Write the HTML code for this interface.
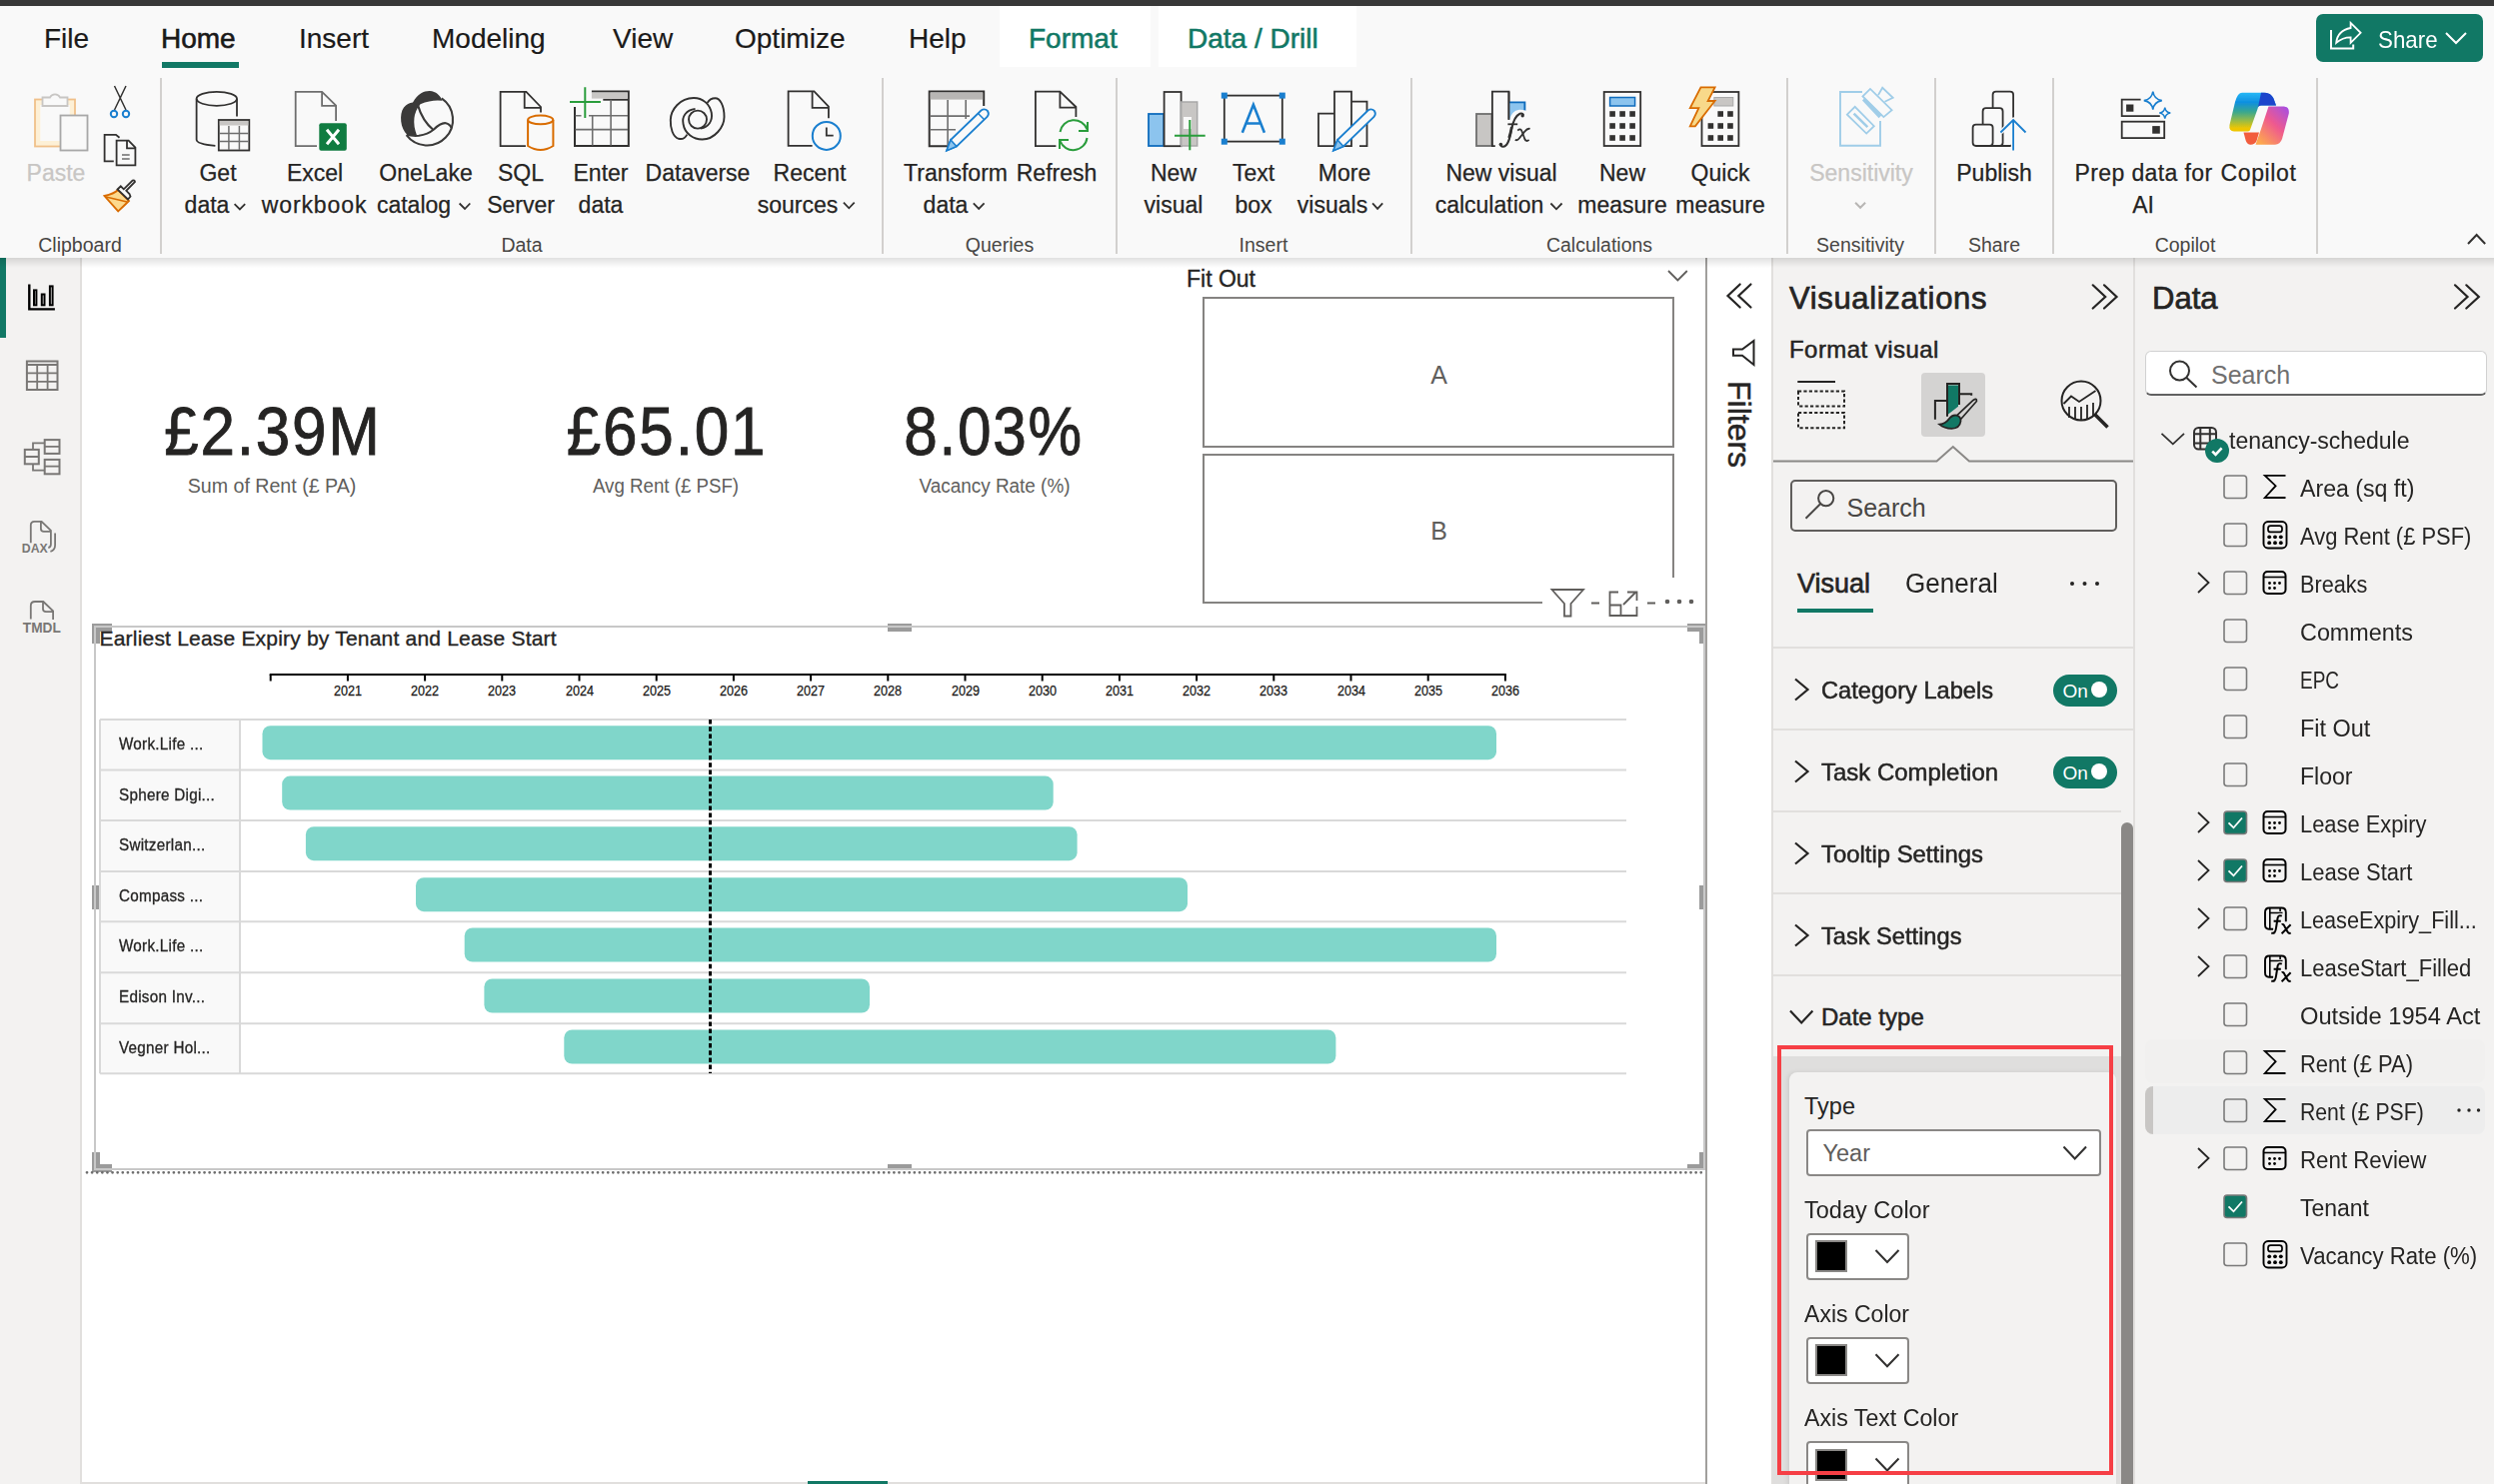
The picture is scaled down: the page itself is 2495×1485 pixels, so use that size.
<!DOCTYPE html>
<html><head><meta charset="utf-8">
<style>
*{margin:0;padding:0;box-sizing:border-box}
html,body{width:2495px;height:1485px;overflow:hidden;background:#fff;font-family:"Liberation Sans",sans-serif;color:#252423}
.a{position:absolute}
.t{position:absolute;line-height:1;white-space:nowrap}
.c{transform:translateX(-50%)}
svg{position:absolute;overflow:visible}
</style></head><body>
<!-- top dark bar -->
<div class="a" style="left:0;top:0;width:2495px;height:6px;background:#383838"></div>
<!-- tab row + ribbon -->
<div class="a" style="left:0;top:6px;width:2495px;height:252px;background:#f9f9f9"></div>
<div class="a" style="left:1000px;top:6px;width:151px;height:61px;background:#fff"></div>
<div class="a" style="left:1159px;top:6px;width:198px;height:61px;background:#fff"></div>
<div id="tabs" style="font-size:28px;color:#1b1a19;-webkit-text-stroke:0.2px currentColor">
<div class="t" style="left:44px;top:25px">File</div>
<div class="t" style="left:161px;top:25px;-webkit-text-stroke:0.6px #1b1a19">Home</div>
<div class="a" style="left:162px;top:62px;width:77px;height:6px;background:#117865"></div>
<div class="t" style="left:299px;top:25px">Insert</div>
<div class="t" style="left:432px;top:25px">Modeling</div>
<div class="t" style="left:613px;top:25px">View</div>
<div class="t" style="left:735px;top:25px">Optimize</div>
<div class="t" style="left:909px;top:25px">Help</div>
<div class="t" style="left:1029px;top:25px;color:#117865;-webkit-text-stroke:0.55px #117865">Format</div>
<div class="t" style="left:1188px;top:25px;color:#117865;-webkit-text-stroke:0.55px #117865">Data / Drill</div>
</div>

<!-- ribbon labels -->
<div id="riblabels" style="font-size:23px;color:#252423;-webkit-text-stroke:0.25px currentColor">
<div class="t c" style="left:56px;top:162px;color:#c8c6c4">Paste</div>
<div class="t c" style="left:218px;top:162px">Get</div>
<div class="t c" style="left:207px;top:194px">data</div>
<div class="t c" style="left:315px;top:162px">Excel</div>
<div class="t c" style="left:314.5px;top:194px;letter-spacing:0.9px">workbook</div>
<div class="t c" style="left:426px;top:162px">OneLake</div>
<div class="t c" style="left:414px;top:194px">catalog</div>
<div class="t c" style="left:521px;top:162px">SQL</div>
<div class="t c" style="left:521px;top:194px">Server</div>
<div class="t c" style="left:601px;top:162px">Enter</div>
<div class="t c" style="left:601px;top:194px">data</div>
<div class="t c" style="left:698px;top:162px">Dataverse</div>
<div class="t c" style="left:810px;top:162px">Recent</div>
<div class="t c" style="left:798px;top:194px">sources</div>
<div class="t c" style="left:956px;top:162px">Transform</div>
<div class="t c" style="left:946px;top:194px">data</div>
<div class="t c" style="left:1057px;top:162px">Refresh</div>
<div class="t c" style="left:1174px;top:162px">New</div>
<div class="t c" style="left:1174px;top:194px">visual</div>
<div class="t c" style="left:1254px;top:162px">Text</div>
<div class="t c" style="left:1254px;top:194px">box</div>
<div class="t c" style="left:1345px;top:162px">More</div>
<div class="t c" style="left:1333px;top:194px">visuals</div>
<div class="t c" style="left:1502px;top:162px">New visual</div>
<div class="t c" style="left:1490px;top:194px">calculation</div>
<div class="t c" style="left:1623px;top:162px">New</div>
<div class="t c" style="left:1623px;top:194px">measure</div>
<div class="t c" style="left:1721px;top:162px">Quick</div>
<div class="t c" style="left:1721px;top:194px">measure</div>
<div class="t c" style="left:1862px;top:162px;color:#c8c6c4">Sensitivity</div>
<div class="t c" style="left:1995px;top:162px">Publish</div>
<div class="t c" style="left:2144.5px;top:162px;letter-spacing:0.4px">Prep data for</div>
<div class="t c" style="left:2144px;top:194px">AI</div>
<div class="t c" style="left:2259.5px;top:162px;letter-spacing:0.6px">Copilot</div>
</div>
<div id="grouplabels" style="font-size:19.5px;color:#484644">
<div class="t c" style="left:80px;top:236px">Clipboard</div>
<div class="t c" style="left:522px;top:236px">Data</div>
<div class="t c" style="left:1000px;top:236px">Queries</div>
<div class="t c" style="left:1264px;top:236px">Insert</div>
<div class="t c" style="left:1600px;top:236px">Calculations</div>
<div class="t c" style="left:1861px;top:236px">Sensitivity</div>
<div class="t c" style="left:1995px;top:236px">Share</div>
<div class="t c" style="left:2186px;top:236px">Copilot</div>
</div>
<!-- separators -->
<div class="a" style="left:160px;top:78px;width:2px;height:176px;background:#d2d0ce"></div>
<div class="a" style="left:882px;top:78px;width:2px;height:176px;background:#d2d0ce"></div>
<div class="a" style="left:1116px;top:78px;width:2px;height:176px;background:#d2d0ce"></div>
<div class="a" style="left:1411px;top:78px;width:2px;height:176px;background:#d2d0ce"></div>
<div class="a" style="left:1787px;top:78px;width:2px;height:176px;background:#d2d0ce"></div>
<div class="a" style="left:1935px;top:78px;width:2px;height:176px;background:#d2d0ce"></div>
<div class="a" style="left:2053px;top:78px;width:2px;height:176px;background:#d2d0ce"></div>
<div class="a" style="left:2317px;top:78px;width:2px;height:176px;background:#d2d0ce"></div>
<svg style="left:0;top:0" width="2495" height="260" viewBox="0 0 2495 260">
<g fill="none" stroke-linejoin="miter">
<!-- Paste -->
<rect x="35" y="99.5" width="40" height="47" fill="#fdf0d6" stroke="#f0c08a" stroke-width="1.8"/><rect x="40.3" y="105" width="29.5" height="36" fill="#f9f9f9"/>
<path d="M42.5 106 V97.5 H50 A5.5 5.5 0 0 1 60 97.5 H67.5 V106 Z" fill="#f9f9f9" stroke="#c8c6c4" stroke-width="1.8"/>
<rect x="60.5" y="115.5" width="27" height="35" fill="#f9f9f9" stroke="#a8a8a8" stroke-width="1.8"/>
<!-- scissors -->
<path d="M114.5 86 L126 110 M126 86 L114.5 110" stroke="#323130" stroke-width="1.5"/>
<circle cx="114" cy="114" r="3.2" stroke="#1a7fcf" stroke-width="2"/>
<circle cx="126" cy="114" r="3.2" stroke="#1a7fcf" stroke-width="2"/>
<!-- copy -->
<path d="M113.8 161.3 H104.6 V134.8 H116 L119.5 137.8" stroke="#323130" stroke-width="1.8"/>
<path d="M116.6 140.6 H128.6 L135.4 147.6 V165.4 H116.6 Z M127 140.6 V148.4 H135.4" stroke="#323130" stroke-width="1.8"/>
<path d="M122 154.9 H129.7 M122 159.1 H129.7" stroke="#6e6e6e" stroke-width="1.5"/>
<!-- format painter -->
<path d="M104.5 196 Q114 194 118 190 L129 201 Q124 206 118.2 211.4 Z" fill="#fcd98d" stroke="#d96c00" stroke-width="1.8"/>
<path d="M106 197 L127 202" stroke="#d96c00" stroke-width="1.5"/>
<path d="M117.5 189.5 L120.8 186.3 L123.8 189.3 L132.6 180.5 Q134.6 180 135 182 L126.3 190.8 L129.5 194 L130.5 196.5 L128 199.5 Z" fill="#f9f9f9" stroke="#323130" stroke-width="1.8"/>
<!-- Get data -->
<path d="M215.4 145.9 Q196.6 144 196.6 139.7 V98.8 M237 98.8 V116.6" stroke="#323130" stroke-width="1.8"/>
<ellipse cx="216.8" cy="98.8" rx="20.2" ry="7" stroke="#323130" stroke-width="1.8"/>
<rect x="218.8" y="120" width="30.5" height="30.5" fill="#f9f9f9" stroke="#323130" stroke-width="1.8"/>
<rect x="219.8" y="121" width="28.5" height="4.5" fill="#c8c6c4"/>
<path d="M228.9 126 V150 M239.4 126 V150 M219.8 133.4 H248.5 M219.8 141.6 H248.5" stroke="#6e6e6e" stroke-width="1.5"/>
<path d="M234.6 204.2 L239.9 209.5 L245.2 204.2" stroke="#323130" stroke-width="1.8"/>
<!-- Excel -->
<path d="M317 146.2 H295.7 V91.8 H322.1 L336.1 105.6 V121 M322.1 91.8 V105.8 H336.1" stroke="#6e6e6e" stroke-width="1.8"/>
<rect x="319.3" y="123.2" width="27.5" height="27.5" rx="2" fill="#107c41"/>
<path d="M327 129.8 L339 144.3 M339 129.8 L327 144.3" stroke="#fff" stroke-width="3"/>
<!-- OneLake -->
<path d="M441.8 98.4 A25.8 25.8 0 1 1 406.6 135.2" stroke="#3b3a39" stroke-width="2.1"/>
<path d="M407.5 135 C400.5 129 399 114 404 107.5 C406.5 104.5 409.5 103.2 413 102.6 C418 93.5 424.5 90.8 430 91 C436 91.3 440.5 95.5 442.5 100.8 Q432 99.5 420.5 104.2 Q410 117 417 135.4 Z" fill="#3b3a39"/>
<path d="M406.8 134.6 Q412 136.4 419 135.8 Q428 134.5 434 129.5 Q441 122.5 446 123.2 Q450 124 451.5 128" stroke="#3b3a39" stroke-width="2.1"/>
<path d="M417.8 104.6 Q422.5 121 433.8 130.3" stroke="#3b3a39" stroke-width="2.1"/>
<!-- SQL -->
<path d="M525.9 146.2 H500.6 V91.8 H526.4 L541 107 V112.6 M524.7 91.8 V107.8 H541" stroke="#323130" stroke-width="1.8"/>
<path d="M528.1 119.9 V146 Q540.7 154 553.4 146 V119.9" fill="#f9f9f9" stroke="#d96c00" stroke-width="2"/>
<ellipse cx="540.7" cy="119.9" rx="12.6" ry="4.3" fill="#f9f9f9" stroke="#d96c00" stroke-width="2"/>
<path d="M459.6 203.5 L465 209 L470.3 203.5" stroke="#323130" stroke-width="1.8"/>
<!-- Enter data -->
<path d="M575 107 V145.9 H628.8 V91.4 H591.9" stroke="#323130" stroke-width="2"/>
<rect x="591.9" y="92.6" width="36" height="6" fill="#c8c6c4"/>
<path d="M603.3 99.8 H628.8" stroke="#323130" stroke-width="1.8"/>
<path d="M575.5 115.7 H581.5 M589 115.7 H628 M575.5 129.6 H628 M592.7 115.7 V145.5 M611.1 99.8 V145.5" stroke="#6e6e6e" stroke-width="1.6"/>
<path d="M585.3 87.2 V117.9 M570 102 H600.9" stroke="#2a9d3c" stroke-width="2"/>
<!-- Dataverse -->
<path d="M687.3 134.6 C685 139 682 139.5 679 138.8 C673 137 670.5 128 670.8 120 C671 110 680 98 694 98 C703 98 710 104 711.8 113 C713 121 709 127 701 128.5" stroke="#323130" stroke-width="1.9"/>
<path d="M695.5 109 C686 110 682 117 683.5 124 C685 134 694 139.5 702.5 139.5 C715 139.5 724.5 127 724.5 117 C724.5 105 720 98.3 715.5 98.3 C711.5 98.3 709 100.5 707.5 103" stroke="#323130" stroke-width="1.9"/>
<circle cx="698" cy="119.6" r="9" stroke="#323130" stroke-width="1.9"/>
<!-- Recent -->
<path d="M812.6 145.9 H788.6 V91.4 H814.4 L828.9 106.7 V118.3 M812.6 91.4 V107.9 H828.9" stroke="#323130" stroke-width="1.8"/>
<circle cx="826.8" cy="135.9" r="14" fill="#f9f9f9" stroke="#1a7fcf" stroke-width="2"/>
<path d="M826.8 127.5 V135.6 H833.7" stroke="#323130" stroke-width="1.8"/>
<path d="M843.9 202.7 L849.3 208.3 L854.7 202.7" stroke="#323130" stroke-width="1.8"/>
<!-- Transform -->
<path d="M949.7 146.2 H929.7 V91.6 H984.2 V106" stroke="#323130" stroke-width="2"/>
<rect x="930.7" y="92.6" width="52.5" height="7" fill="#b8b6b4"/>
<path d="M948.1 100 V146 M966.2 100 V119 M930.7 116.1 H970 M930.7 129.7 H956" stroke="#6e6e6e" stroke-width="1.6"/>
<path d="M947.1 150.6 L951 140 L981.5 110.5 Q985 108 988 111 Q990 114 987.5 117 L957 146.5 Z" fill="#f9f9f9" stroke="#1a7fcf" stroke-width="1.8"/>
<path d="M947.1 150.6 L951 140 L957 146.5 Z" fill="#8cc4ee" stroke="#1a7fcf" stroke-width="1.5"/>
<path d="M978.5 113.5 L984.5 119.5" stroke="#1a7fcf" stroke-width="1.5"/>
<path d="M973.8 203.3 L979.2 208.9 L984.6 203.3" stroke="#323130" stroke-width="1.8"/>
<!-- Refresh -->
<path d="M1056.4 146.2 H1035.9 V91.6 H1060.4 L1076.4 107 V117.1 M1060.4 91.6 V107.7 H1076.4" stroke="#323130" stroke-width="1.8"/>
<path d="M1060.5 132 A14 14 0 0 1 1087.5 129.5 M1087.5 138 A14 14 0 0 1 1060.5 141" stroke="#2a9d3c" stroke-width="2"/>
<path d="M1079 131 H1088 V122 M1069 140 H1060 V149" stroke="#2a9d3c" stroke-width="2"/>
<!-- New visual -->
<rect x="1149" y="114" width="15.2" height="32" fill="#8cc4ee" stroke="#0f6cbd" stroke-width="1.8"/>
<rect x="1164.6" y="92" width="17" height="54.2" fill="#f9f9f9" stroke="#323130" stroke-width="1.8"/>
<rect x="1181.7" y="102" width="16" height="44" fill="#c8c6c4" stroke="#a8a8a8" stroke-width="1.5"/>
<rect x="1184" y="117" width="8" height="12" fill="#f9f9f9"/>
<path d="M1190.3 120.1 V150.2 M1175 135.7 H1205.7" stroke="#2a9d3c" stroke-width="2"/>
<!-- Text box -->
<rect x="1224.8" y="95.6" width="58" height="46" stroke="#323130" stroke-width="1.8"/>
<rect x="1221.8" y="92.6" width="6" height="6" fill="#1a7fcf"/>
<rect x="1279.8" y="92.6" width="6" height="6" fill="#1a7fcf"/>
<rect x="1221.8" y="138.7" width="6" height="6" fill="#1a7fcf"/>
<rect x="1279.8" y="138.7" width="6" height="6" fill="#1a7fcf"/>
<path d="M1242.8 132.8 L1253.9 104.8 L1264.9 132.8 M1246.8 123.5 H1261" stroke="#1a7fcf" stroke-width="2.6"/>
<!-- More visuals -->
<path d="M1335 146.2 H1319 V113.7 H1335 M1335 146.2 V91.6 H1352 V146.2 H1340 M1352 101.7 H1367.5 V146.2 H1360" stroke="#323130" stroke-width="1.8"/>
<path d="M1334 150.6 L1338 140 L1368.5 110.5 Q1372 108 1375 111 Q1377 114 1374.5 117 L1344 146.5 Z" fill="#f9f9f9" stroke="#1a7fcf" stroke-width="1.8"/>
<path d="M1334 150.6 L1338 140 L1344 146.5 Z" fill="#8cc4ee" stroke="#1a7fcf" stroke-width="1.5"/>
<path d="M1373.1 203.3 L1378.1 208.9 L1383.2 203.3" stroke="#323130" stroke-width="1.8"/>
<!-- New visual calc -->
<rect x="1477" y="114" width="15.4" height="32" fill="#c8c6c4" stroke="#6e6e6e" stroke-width="1.8"/>
<path d="M1492.9 146.2 V91.6 H1509.5 V119.8 M1492 146.1 H1495.8" stroke="#323130" stroke-width="1.8"/>
<rect x="1510" y="102.4" width="15.4" height="18" fill="#8cc4ee"/>
<path d="M1509.5 102.4 H1525.4 V110.8" stroke="#0f6cbd" stroke-width="1.9"/>
<path d="M1509.8 121 Q1511.8 110.8 1520 109.8 Q1524.3 109.6 1527 111.2 V122 Z" fill="#f9f9f9"/>
<path d="M1509.5 91.6 V119.8" stroke="#323130" stroke-width="1.8"/>
<path d="M1501.2 145.3 Q1503.8 148.5 1507.2 144.8 Q1510.2 140.8 1512 130 Q1514.5 116.5 1520.5 113.8 Q1523.3 112.8 1524 115.3" stroke="#323130" stroke-width="2.1"/><path d="M1509.6 138 Q1511.3 133 1512.3 127" stroke="#323130" stroke-width="2.6"/>
<circle cx="1501.4" cy="144.6" r="1.8" fill="#323130"/><circle cx="1523.2" cy="115.8" r="1.7" fill="#323130"/>
<path d="M1508.4 124.3 H1518.2" stroke="#323130" stroke-width="1.8"/>
<path d="M1518.3 130.6 Q1521.2 127.6 1522.8 132 L1525.3 139 Q1527 142.5 1529.6 139.8" stroke="#323130" stroke-width="1.8"/>
<path d="M1530.6 128.9 Q1528.2 128 1525.2 131.8 L1520.2 138 Q1517.8 141.2 1515.8 139.8" stroke="#323130" stroke-width="1.8"/>
<path d="M1551.4 203.5 L1557 209.3 L1562.6 203.5" stroke="#323130" stroke-width="1.8"/>
<!-- New measure -->
<rect x="1604.7" y="92" width="36.5" height="54" stroke="#323130" stroke-width="1.8"/>
<rect x="1610.6" y="97.5" width="25" height="8.5" fill="#8cc4ee" stroke="#0f6cbd" stroke-width="1.5"/>
<g fill="#323130" stroke="none">
<rect x="1610.3" y="111.2" width="5.6" height="5.6"/><rect x="1620.3" y="111.2" width="5.6" height="5.6"/><rect x="1630.3" y="111.2" width="5.6" height="5.6"/>
<rect x="1610.3" y="123.2" width="5.6" height="5.6"/><rect x="1620.3" y="123.2" width="5.6" height="5.6"/><rect x="1630.3" y="123.2" width="5.6" height="5.6"/>
<rect x="1610.3" y="135.2" width="5.6" height="5.6"/><rect x="1620.3" y="135.2" width="5.6" height="5.6"/><rect x="1630.3" y="135.2" width="5.6" height="5.6"/>
</g>
<!-- Quick measure -->
<rect x="1702.5" y="92" width="36.9" height="54" stroke="#323130" stroke-width="1.8"/>
<rect x="1714.9" y="97.5" width="18.9" height="8.5" fill="#c8c6c4" stroke="#a8a8a8" stroke-width="1"/>
<g fill="#323130" stroke="none">
<rect x="1718.4" y="111.2" width="5.6" height="5.6"/><rect x="1728.2" y="111.2" width="5.6" height="5.6"/>
<rect x="1708.6" y="123.2" width="5.6" height="5.6"/><rect x="1718.4" y="123.2" width="5.6" height="5.6"/><rect x="1728.2" y="123.2" width="5.6" height="5.6"/>
<rect x="1708.6" y="135.2" width="5.6" height="5.6"/><rect x="1718.4" y="135.2" width="5.6" height="5.6"/><rect x="1728.2" y="135.2" width="5.6" height="5.6"/>
</g>
<path d="M1701.5 87.3 H1715.6 L1708.6 101 H1715.6 L1695.9 126.3 H1690.8 L1699.4 108.1 H1690.8 Z" fill="#f8d98a" stroke="#d96c00" stroke-width="1.8"/>
<!-- Sensitivity -->
<path d="M1863 92 H1841 V145.8 H1881 V121" stroke="#a0cde8" stroke-width="1.9"/>
<path d="M1847.9 114.7 L1855.7 106.9 L1874.8 126.2 L1867.2 133.6 Z" stroke="#a0cde8" stroke-width="1.8"/>
<path d="M1854.6 113.6 L1868.3 127.1" stroke="#a0cde8" stroke-width="2.6"/>
<path d="M1863.5 96.4 L1871 88.9 L1892.6 110.2 L1884.4 117.1 Z" fill="#f9f9f9" stroke="#a0cde8" stroke-width="1.8"/>
<path d="M1863 100.5 L1865.2 98.2 L1882.8 114.9 L1879.6 118.2 Z" fill="#a0cde8"/>
<path d="M1879 95.1 L1883.2 87.8 L1893.7 97.8 L1885.5 101.8" stroke="#a0cde8" stroke-width="1.8"/>
<path d="M1856.1 202.7 L1861.1 207.8 L1866.1 202.7" stroke="#b8b6b4" stroke-width="2"/>
<!-- Publish -->
<rect x="1993.6" y="91.6" width="20.5" height="54.4" rx="3.2" fill="#f9f9f9" stroke="#323130" stroke-width="1.8"/>
<rect x="1983.6" y="108.2" width="20" height="37.8" rx="3.2" fill="#f9f9f9" stroke="#323130" stroke-width="1.8"/>
<rect x="1973.6" y="124.6" width="20" height="21.4" rx="3.2" fill="#f9f9f9" stroke="#323130" stroke-width="1.8"/>
<path d="M2014.1 120.1 V150.6 M2001.4 132.5 L2014.1 120.1 L2026.5 132.5" stroke="#f9f9f9" stroke-width="4.5"/>
<path d="M2014.1 120.1 V150.6 M2001.4 132.5 L2014.1 120.1 L2026.5 132.5" stroke="#1a7fcf" stroke-width="1.8"/>
<!-- Prep data for AI -->
<path d="M2141.6 99.6 H2122.7 V116.1 H2160.8" stroke="#323130" stroke-width="1.8"/>
<rect x="2127.1" y="104.5" width="7.3" height="7.2" fill="#323130"/>
<rect x="2122.7" y="121.7" width="42.5" height="16.4" stroke="#323130" stroke-width="1.8"/>
<rect x="2153.2" y="126.1" width="7.6" height="7.6" fill="#323130"/>
<path d="M2153.8 91.6 Q2155 99.4 2162.8 100.6 Q2155 101.8 2153.8 109.6 Q2152.6 101.8 2144.8 100.6 Q2152.6 99.4 2153.8 91.6 Z" fill="#f9f9f9" stroke="#1a7fcf" stroke-width="1.6"/>
<path d="M2165.8 107.6 Q2166.5 112.4 2171.3 113.1 Q2166.5 113.8 2165.8 118.6 Q2165.1 113.8 2160.3 113.1 Q2165.1 112.4 2165.8 107.6 Z" fill="#f9f9f9" stroke="#1a7fcf" stroke-width="1.5"/>
</g>
<!-- Copilot -->
<defs>
<linearGradient id="cpA" x1="0" y1="0" x2="0" y2="1"><stop offset="0" stop-color="#26b8f6"/><stop offset="0.25" stop-color="#0f8fe0"/><stop offset="0.5" stop-color="#3aa88e"/><stop offset="0.72" stop-color="#96bb48"/><stop offset="0.92" stop-color="#eec600"/></linearGradient>
<linearGradient id="cpB" x1="1" y1="0" x2="0.2" y2="1"><stop offset="0" stop-color="#a24ee8"/><stop offset="0.5" stop-color="#ef5a8e"/><stop offset="1" stop-color="#fda84e"/></linearGradient>
<filter id="cpblur"><feGaussianBlur stdDeviation="0.7"/></filter>
</defs>
<g filter="url(#cpblur)">
<path d="M2244.5 132.5 H2260 L2257.5 141 Q2255.5 145 2251 144.7 Q2247.5 144.2 2246.5 140 Z" fill="#f25c3c"/>
<path d="M2243 92.7 H2264 Q2271 92.7 2274 97.5 L2277 105.6 H2262 Q2259 106 2258.5 109 L2250.8 130.5 Q2250 131.5 2248.5 131.5 H2235 Q2229.5 131 2230.5 125 L2236 102 Q2238.5 92.7 2243 92.7 Z" fill="url(#cpA)"/>
<path d="M2262 92.7 H2266 Q2272 93 2274.5 98.5 L2277 105.6 H2262 Q2259.5 106 2259 107 Z" fill="#1f45cc"/>
<path d="M2269.5 106.5 H2285 Q2290.5 107 2289.8 113.5 L2283 139 Q2281 144.7 2276 144.7 H2256.5 L2261.5 130.5 Z" fill="url(#cpB)"/>
</g>
</svg>

<!-- share button -->
<div class="a" style="left:2317px;top:14px;width:167px;height:48px;background:#117865;border-radius:7px"></div>
<div class="t" style="left:2378.5px;top:27.6px;font-size:24px;color:#fff;transform-origin:left;transform:scaleX(0.93)">Share</div>
<svg style="left:0;top:0" width="2495" height="260" viewBox="0 0 2495 260"><g fill="none" stroke-width="2">
<path d="M2332 30 V48.6 H2354.2 V44.5" stroke="#fff"/>
<path d="M2337.2 42.8 Q2338.5 30.5 2351.6 28 V22.8 L2361.6 32.8 L2351.6 42.8 V37.3 Q2343.5 37.3 2337.2 42.8 Z" stroke="#fff" stroke-width="1.8" stroke-linejoin="miter"/>
<path d="M2447 33 L2457 43 L2467 33" stroke="#fff"/>
<path d="M2469 244 L2477.6 235 L2486.2 244" stroke="#323130"/>
</g></svg>
<!-- ribbon bottom shadow -->
<div class="a" style="left:0;top:258px;width:2495px;height:10px;background:linear-gradient(#d8d8d8,rgba(255,255,255,0))"></div>

<!-- left nav -->
<div class="a" style="left:0;top:258px;width:80px;height:1227px;background:#f3f2f1"></div>
<div class="a" style="left:80px;top:258px;width:2px;height:1227px;background:#e1dfdd"></div>
<div class="a" style="left:0;top:258px;width:6px;height:80px;background:#117865"></div>

<!-- canvas -->
<div class="a" style="left:82px;top:258px;width:1624px;height:1227px;background:#fff"></div>
<div class="a" style="left:1706px;top:258px;width:2px;height:1227px;background:#a19f9d"></div>
<!-- filters strip -->
<div class="a" style="left:1708px;top:258px;width:64px;height:1227px;background:#fff"></div>
<div class="a" style="left:1772px;top:258px;width:2px;height:1227px;background:#e1dfdd"></div>
<!-- viz pane -->
<div class="a" style="left:1774px;top:258px;width:360px;height:1227px;background:#f3f2f1"></div>
<div class="a" style="left:2134px;top:258px;width:2px;height:1227px;background:#e1dfdd"></div>
<!-- data pane -->
<div class="a" style="left:2136px;top:258px;width:359px;height:1227px;background:#f3f2f1"></div>
<!-- CANVAS -->
<svg style="left:0;top:0" width="90" height="660" viewBox="0 0 90 660"><g fill="none" stroke-linejoin="miter">
<path d="M29.3 284.4 V309.4 H54.9" stroke="#000" stroke-width="2.4"/>
<rect x="34" y="290.4" width="2.4" height="14.9" stroke="#000" stroke-width="2"/>
<rect x="41.8" y="294.5" width="2.7" height="10.8" stroke="#000" stroke-width="2"/>
<rect x="49.9" y="286.4" width="2.7" height="18.9" stroke="#000" stroke-width="2"/>
<rect x="26.9" y="361.5" width="30.6" height="28.5" stroke="#797775" stroke-width="2"/>
<path d="M26.9 365 H57.5 M26.9 373.4 H57.5 M26.9 381.8 H57.5 M37.2 365 V390 M47.6 365 V390" stroke="#797775" stroke-width="1.8"/>
<rect x="24.8" y="449.9" width="14" height="14.4" stroke="#797775" stroke-width="2"/>
<rect x="44.7" y="440.1" width="14.8" height="13.8" stroke="#797775" stroke-width="2"/>
<rect x="44.7" y="459.9" width="14.8" height="14.4" stroke="#797775" stroke-width="2"/>
<path d="M24.8 457 H38.8 M44.7 446.8 H59.5 M44.7 466.6 H59.5 M33 449.9 V443.4 H44.7 M33 464.3 V470.6 H44.7" stroke="#797775" stroke-width="1.8"/>
<path d="M30.8 543.2 V525.5 Q30.8 521.9 34.5 521.9 H41.6 L50.9 530.8 V544.5 Q50.9 547.6 48.3 548 M40.9 522 V529 Q40.9 531.9 43.8 531.9 H50.7 M55.1 533.6 V545.5 Q55.1 550.6 50.4 551.8" stroke="#797775" stroke-width="1.8"/>
<path d="M30.8 619.6 V606.2 Q30.8 602 35 602 H43.3 L53.1 611.4 V620 M43 602.2 V609.2 Q43 612.1 46 612.1 H52.6" stroke="#797775" stroke-width="1.8"/>
</g>
<text x="21.8" y="552.7" font-family="Liberation Sans" font-weight="bold" font-size="13" fill="#797775" textLength="26" lengthAdjust="spacingAndGlyphs">DAX</text>
<text x="22.8" y="632.8" font-family="Liberation Sans" font-weight="bold" font-size="14" fill="#797775" textLength="38" lengthAdjust="spacingAndGlyphs">TMDL</text>
</svg>
<div class="t" style="left:273px;top:397.8px;font-size:68.5px;color:#252423;-webkit-text-stroke:0.9px #252423;letter-spacing:2px;transform:translateX(-50%) scaleX(0.905)">£2.39M</div>
<div class="t" style="left:271.5px;top:476px;font-size:20px;color:#605e5c;transform:translateX(-50%) scaleX(0.98)">Sum of Rent (£ PA)</div>
<div class="t" style="left:667px;top:397.8px;font-size:68.5px;color:#252423;-webkit-text-stroke:0.9px #252423;letter-spacing:2px;transform:translateX(-50%) scaleX(0.905)">£65.01</div>
<div class="t" style="left:666px;top:476px;font-size:20px;color:#605e5c;transform:translateX(-50%) scaleX(0.934)">Avg Rent (£ PSF)</div>
<div class="t" style="left:994.2px;top:397.8px;font-size:68.5px;color:#252423;-webkit-text-stroke:0.9px #252423;letter-spacing:2px;transform:translateX(-50%) scaleX(0.88)">8.03%</div>
<div class="t" style="left:994.5px;top:476px;font-size:20px;color:#605e5c;transform:translateX(-50%) scaleX(0.946)">Vacancy Rate (%)</div>
<div class="t" style="left:1187px;top:267.7px;font-size:23px;color:#252423;-webkit-text-stroke:0.35px #252423">Fit Out</div>
<div class="a" style="left:1203px;top:297px;width:472px;height:151px;border:2px solid #858381"></div>
<div class="a" style="left:1203px;top:454px;width:472px;height:150px;border:2px solid #858381"></div>
<div class="t c" style="left:1439.5px;top:362.8px;font-size:25px;color:#605e5c">A</div>
<div class="t c" style="left:1439.5px;top:518.8px;font-size:25px;color:#605e5c">B</div>
<div class="a" style="left:1543px;top:578px;width:160px;height:44px;background:#fff"></div>
<svg style="left:0;top:0" width="1710" height="700" viewBox="0 0 1710 700"><g fill="none" stroke="#605e5c" stroke-width="1.8">
<path d="M1669 271 L1678.4 280.5 L1687.8 271"/>
<path d="M1552.5 590 H1584 L1571.5 604 V616.5 H1565 V604 Z"/>
<path d="M1592 603.5 H1600 M1648 603.5 H1656"/>
<path d="M1619 592.5 H1610.5 V616 H1637.5 V607 M1610.5 605.5 H1621.5 V616 M1624 605 L1636 593 M1628 592.5 H1637.5 V601" />
</g>
<g fill="#605e5c"><circle cx="1668" cy="602" r="2.3"/><circle cx="1680" cy="602" r="2.3"/><circle cx="1692" cy="602" r="2.3"/></g>
</svg>
<div class="a" style="left:94px;top:626px;width:1612px;height:545px;border:2px solid #c8c8c8"></div>
<svg style="left:0;top:0" width="1710" height="1180" viewBox="0 0 1710 1180"><g fill="#9b9b9b">
<path d="M92 624 H112 V626 H94 V644 H92 Z M96 628 H112 V632 H100 V644 H96 Z"/>
<path d="M1688 624 H1706 V626 H1688 Z M1688 628 H1704 V644 H1700 V632 H1688 Z"/>
<path d="M92 1173 H112 V1171 H94 V1153 H92 Z M96 1169 H112 V1165 H100 V1153 H96 Z"/>
<path d="M1688 1169 H1704 V1153 H1700 V1165 H1688 Z"/>
<rect x="888" y="624" width="24" height="2"/><rect x="888" y="628" width="24" height="4"/>
<rect x="888" y="1165" width="24" height="4"/>
<rect x="92" y="886" width="2" height="24"/><rect x="96" y="886" width="4" height="24"/>
<rect x="1700" y="886" width="4" height="24"/>
</g>
<line x1="87" y1="1173.3" x2="1706" y2="1173.3" stroke="#6e6e6e" stroke-width="2.8" stroke-linecap="round" stroke-dasharray="0.01 5.1"/>
</svg>
<div class="t" style="left:99.5px;top:628.2px;font-size:21px;color:#252423;-webkit-text-stroke:0.35px #252423;letter-spacing:0.2px;transform-origin:left;transform:scaleX(1.0)">Earliest Lease Expiry by Tenant and Lease Start</div>
<svg style="left:0;top:0" width="1710" height="1100" viewBox="0 0 1710 1100">
<line x1="269.7" y1="675" x2="1506.9" y2="675" stroke="#000" stroke-width="2.2"/>
<path d="M270.7 675 V681.5 M347.9 675 V681.5 M425.1 675 V681.5 M502.3 675 V681.5 M579.5 675 V681.5 M656.7 675 V681.5 M733.9 675 V681.5 M811.1 675 V681.5 M888.3 675 V681.5 M965.5 675 V681.5 M1042.7 675 V681.5 M1119.9 675 V681.5 M1197.1 675 V681.5 M1274.3 675 V681.5 M1351.5 675 V681.5 M1428.7 675 V681.5 M1505.9 675 V681.5 " stroke="#000" stroke-width="2"/>
<rect x="100" y="720" width="140" height="354.2" fill="#f9f9f9"/>
<path d="M100 720 H1627 M100 770.4 H1627 M100 821 H1627 M100 872 H1627 M100 922.3 H1627 M100 973.3 H1627 M100 1024.3 H1627 M100 1074.2 H1627 M240 720 V1074.2 M100 720 V1074.2" stroke="#d9d9d9" stroke-width="2" fill="none"/>
<rect x="262.5" y="726.2" width="1234.5" height="34" rx="8" fill="#80d6ca"/>
<rect x="282.2" y="776.6" width="771.5" height="34" rx="8" fill="#80d6ca"/>
<rect x="305.9" y="827.2" width="771.7" height="34" rx="8" fill="#80d6ca"/>
<rect x="416" y="878.2" width="772.0" height="34" rx="8" fill="#80d6ca"/>
<rect x="464.7" y="928.5" width="1032.3" height="34" rx="8" fill="#80d6ca"/>
<rect x="484.4" y="979.5" width="385.6" height="34" rx="8" fill="#80d6ca"/>
<rect x="564.3" y="1030.5" width="772.1" height="34" rx="8" fill="#80d6ca"/>
<line x1="710.5" y1="720" x2="710.5" y2="1074" stroke="#000" stroke-width="3" stroke-dasharray="4.5 2.7"/>
</svg>
<div class="t" style="left:348.0px;top:684.3px;font-size:14px;color:#1b1a19;-webkit-text-stroke:0.25px #1b1a19;transform:translateX(-50%) scaleX(0.9)">2021</div>
<div class="t" style="left:425.2px;top:684.3px;font-size:14px;color:#1b1a19;-webkit-text-stroke:0.25px #1b1a19;transform:translateX(-50%) scaleX(0.9)">2022</div>
<div class="t" style="left:502.4px;top:684.3px;font-size:14px;color:#1b1a19;-webkit-text-stroke:0.25px #1b1a19;transform:translateX(-50%) scaleX(0.9)">2023</div>
<div class="t" style="left:579.6px;top:684.3px;font-size:14px;color:#1b1a19;-webkit-text-stroke:0.25px #1b1a19;transform:translateX(-50%) scaleX(0.9)">2024</div>
<div class="t" style="left:656.8px;top:684.3px;font-size:14px;color:#1b1a19;-webkit-text-stroke:0.25px #1b1a19;transform:translateX(-50%) scaleX(0.9)">2025</div>
<div class="t" style="left:734.0px;top:684.3px;font-size:14px;color:#1b1a19;-webkit-text-stroke:0.25px #1b1a19;transform:translateX(-50%) scaleX(0.9)">2026</div>
<div class="t" style="left:811.2px;top:684.3px;font-size:14px;color:#1b1a19;-webkit-text-stroke:0.25px #1b1a19;transform:translateX(-50%) scaleX(0.9)">2027</div>
<div class="t" style="left:888.4px;top:684.3px;font-size:14px;color:#1b1a19;-webkit-text-stroke:0.25px #1b1a19;transform:translateX(-50%) scaleX(0.9)">2028</div>
<div class="t" style="left:965.6px;top:684.3px;font-size:14px;color:#1b1a19;-webkit-text-stroke:0.25px #1b1a19;transform:translateX(-50%) scaleX(0.9)">2029</div>
<div class="t" style="left:1042.8px;top:684.3px;font-size:14px;color:#1b1a19;-webkit-text-stroke:0.25px #1b1a19;transform:translateX(-50%) scaleX(0.9)">2030</div>
<div class="t" style="left:1120.0px;top:684.3px;font-size:14px;color:#1b1a19;-webkit-text-stroke:0.25px #1b1a19;transform:translateX(-50%) scaleX(0.9)">2031</div>
<div class="t" style="left:1197.2px;top:684.3px;font-size:14px;color:#1b1a19;-webkit-text-stroke:0.25px #1b1a19;transform:translateX(-50%) scaleX(0.9)">2032</div>
<div class="t" style="left:1274.4px;top:684.3px;font-size:14px;color:#1b1a19;-webkit-text-stroke:0.25px #1b1a19;transform:translateX(-50%) scaleX(0.9)">2033</div>
<div class="t" style="left:1351.6px;top:684.3px;font-size:14px;color:#1b1a19;-webkit-text-stroke:0.25px #1b1a19;transform:translateX(-50%) scaleX(0.9)">2034</div>
<div class="t" style="left:1428.8px;top:684.3px;font-size:14px;color:#1b1a19;-webkit-text-stroke:0.25px #1b1a19;transform:translateX(-50%) scaleX(0.9)">2035</div>
<div class="t" style="left:119px;top:736.9px;font-size:16px;color:#252423;-webkit-text-stroke:0.3px #252423;letter-spacing:0.3px;transform-origin:left;transform:scaleX(0.95)">Work.Life ...</div>
<div class="t" style="left:119px;top:787.5px;font-size:16px;color:#252423;-webkit-text-stroke:0.3px #252423;letter-spacing:0.3px;transform-origin:left;transform:scaleX(0.95)">Sphere Digi...</div>
<div class="t" style="left:119px;top:838.1px;font-size:16px;color:#252423;-webkit-text-stroke:0.3px #252423;letter-spacing:0.3px;transform-origin:left;transform:scaleX(0.95)">Switzerlan...</div>
<div class="t" style="left:119px;top:888.7px;font-size:16px;color:#252423;-webkit-text-stroke:0.3px #252423;letter-spacing:0.3px;transform-origin:left;transform:scaleX(0.95)">Compass ...</div>
<div class="t" style="left:119px;top:939.2px;font-size:16px;color:#252423;-webkit-text-stroke:0.3px #252423;letter-spacing:0.3px;transform-origin:left;transform:scaleX(0.95)">Work.Life ...</div>
<div class="t" style="left:119px;top:989.9px;font-size:16px;color:#252423;-webkit-text-stroke:0.3px #252423;letter-spacing:0.3px;transform-origin:left;transform:scaleX(0.95)">Edison Inv...</div>
<div class="t" style="left:119px;top:1040.5px;font-size:16px;color:#252423;-webkit-text-stroke:0.3px #252423;letter-spacing:0.3px;transform-origin:left;transform:scaleX(0.95)">Vegner Hol...</div>
<div class="t" style="left:1506.0px;top:684.3px;font-size:14px;color:#1b1a19;-webkit-text-stroke:0.25px #1b1a19;transform:translateX(-50%) scaleX(0.9)">2036</div>
<div class="a" style="left:82px;top:1483px;width:1624px;height:2px;background:#e1dfdd"></div>
<div class="a" style="left:808px;top:1482px;width:80px;height:3px;background:#117865"></div>
<!-- /CANVAS -->
<!-- PANES -->
<svg style="left:0;top:0" width="2495" height="1485" viewBox="0 0 2495 1485"><g fill="none" stroke="#252423" stroke-width="2.2" stroke-linecap="round">
<path d="M1740.7 284.5 L1728.5 296 L1740.7 307.5 M1751.5 284.5 L1739.3 296 L1751.5 307.5"/>
<path d="M1754.5 341 V365 L1743 355.8 H1734 V349.6 H1743 Z" stroke-width="2" stroke-linejoin="miter" stroke-linecap="butt"/>
<path d="M2093.7 285.3 L2106.2 297 L2093.7 308.5 M2105 285.3 L2117.5 297 L2105 308.5"/>
<path d="M2456 285.3 L2468.5 297 L2456 308.5 M2467.3 285.3 L2479.8 297 L2467.3 308.5"/>
</g></svg>
<div class="t" style="left:1724.3px;top:381px;font-size:32px;color:#252423;-webkit-text-stroke:0.5px #252423;transform-origin:0 0;transform:rotate(90deg) translateY(-100%)">Filters</div>
<div class="t" style="left:1790px;top:282.6px;font-size:31px;color:#252423;-webkit-text-stroke:0.7px #252423;letter-spacing:0.65px">Visualizations</div>
<div class="t" style="left:1790px;top:338.4px;font-size:24px;color:#252423;-webkit-text-stroke:0.5px #252423;letter-spacing:0.45px">Format visual</div>
<div class="a" style="left:1922px;top:373px;width:64px;height:64px;background:#d4d3d2;border-radius:4px"></div>
<svg style="left:0;top:0" width="2495" height="1485" viewBox="0 0 2495 1485"><g fill="none" stroke="#252423" stroke-width="2">
<path d="M1798.3 382 H1836"/>
<rect x="1799" y="391.5" width="46" height="15" stroke-dasharray="3.2 2.2"/>
<rect x="1799" y="413" width="46" height="15.3" stroke-dasharray="3.2 2.2"/>
<path d="M1935.9 419.8 V401 H1948.5 M1960.9 394.2 H1972.2 V395.8"/>
<path d="M1949 385.5 H1959 V406.8 L1949 414.5 Z" fill="#117865" stroke="none"/>
<path d="M1948 416.8 V384 H1960 V405" />
<path d="M1957.8 415.6 L1974 400.5 Q1977.8 397.8 1977.4 401.5 L1961.8 419.2" fill="#d4d3d2" stroke-width="1.7"/>
<path d="M1940.2 424.6 Q1946.5 424 1949.5 419.5 Q1953 414.8 1957.3 415.6 Q1962 417 1961.5 421.5 Q1960.5 428.8 1952.5 428.9 Q1945.2 428.8 1940.2 424.6 Z" fill="#117865" stroke-width="1.8"/>
<circle cx="2082" cy="401" r="19.5"/>
<path d="M2064.5 404 L2072 396.5 L2080 402 L2096.5 391" stroke-width="1.8"/>
<path d="M2070 407 V418 M2076 407 V420 M2082 407 V421 M2088 405 V420 M2094 403 V417" stroke-width="1.8"/>
<path d="M2096 415 L2108.5 427.5" stroke-width="3.5"/>
<path d="M1774 461.5 H1937.5 L1953.8 447 L1970 461.5 H2134" stroke="#8a8886" stroke-width="2"/>
</g></svg>
<div class="a" style="left:1790.5px;top:479.5px;width:327px;height:52px;border:2px solid #605e5c;border-radius:5px"></div>
<svg style="left:0;top:0" width="2495" height="1485" viewBox="0 0 2495 1485"><g fill="none" stroke="#484644" stroke-width="2">
<circle cx="1826.7" cy="498.6" r="7.6"/><path d="M1821.3 504 L1806.5 518.8"/></g></svg>
<div class="t" style="left:1847.5px;top:495.8px;font-size:25px;color:#484644">Search</div>
<div class="t" style="left:1798px;top:571.4px;font-size:27px;color:#252423;-webkit-text-stroke:0.6px #252423">Visual</div>
<div class="a" style="left:1798px;top:609px;width:76px;height:4px;background:#117865"></div>
<div class="t" style="left:1905.5px;top:571.4px;font-size:27px;color:#252423;transform-origin:left;transform:scaleX(0.965)">General</div>
<svg style="left:0;top:0" width="2495" height="1485" viewBox="0 0 2495 1485"><g fill="#252423"><circle cx="2073" cy="584" r="2"/><circle cx="2085.5" cy="584" r="2"/><circle cx="2098" cy="584" r="2"/></g></svg>
<div class="a" style="left:1774px;top:647px;width:360px;height:2px;background:#e1dfdd"></div>
<div class="a" style="left:1774px;top:729px;width:360px;height:2px;background:#e1dfdd"></div>
<div class="a" style="left:1774px;top:811px;width:348px;height:2px;background:#e1dfdd"></div>
<div class="a" style="left:1774px;top:893px;width:348px;height:2px;background:#e1dfdd"></div>
<div class="a" style="left:1774px;top:975px;width:348px;height:2px;background:#e1dfdd"></div>
<div class="t" style="left:1822px;top:679.1px;font-size:24px;color:#252423;-webkit-text-stroke:0.5px #252423;transform-origin:left;transform:scaleX(0.984)">Category Labels</div>
<div class="a" style="left:2054px;top:674.5px;width:64px;height:32px;border-radius:16px;background:#117865"></div>
<div class="t" style="left:2063.5px;top:681.7px;font-size:19px;color:#fff">On</div>
<div class="a" style="left:2091.5px;top:682px;width:16px;height:16px;border-radius:8px;background:#fff"></div>
<div class="t" style="left:1822px;top:761.1px;font-size:24px;color:#252423;-webkit-text-stroke:0.5px #252423;transform-origin:left;transform:scaleX(0.998)">Task Completion</div>
<div class="a" style="left:2054px;top:756.5px;width:64px;height:32px;border-radius:16px;background:#117865"></div>
<div class="t" style="left:2063.5px;top:763.7px;font-size:19px;color:#fff">On</div>
<div class="a" style="left:2091.5px;top:764px;width:16px;height:16px;border-radius:8px;background:#fff"></div>
<div class="t" style="left:1822px;top:843.1px;font-size:24px;color:#252423;-webkit-text-stroke:0.5px #252423;transform-origin:left;transform:scaleX(0.995)">Tooltip Settings</div>
<div class="t" style="left:1822px;top:925.1px;font-size:24px;color:#252423;-webkit-text-stroke:0.5px #252423;transform-origin:left;transform:scaleX(0.984)">Task Settings</div>
<svg style="left:0;top:0" width="2495" height="1485" viewBox="0 0 2495 1485"><path d="M1796 679.5 L1808.5 690 L1796 700.5 M1796 761.5 L1808.5 772 L1796 782.5 M1796 843.5 L1808.5 854 L1796 864.5 M1796 925.5 L1808.5 936 L1796 946.5 M1791 1011.5 L1802.2 1023.5 L1813.4 1011.5" fill="none" stroke="#252423" stroke-width="2.2"/></svg>
<div class="t" style="left:1822px;top:1005.9px;font-size:24px;color:#252423;-webkit-text-stroke:0.5px #252423;transform-origin:left;transform:scaleX(1.0)">Date type</div>
<div class="a" style="left:1774px;top:1057px;width:348px;height:428px;background:#dfdedd"></div>
<div class="a" style="left:1790px;top:1073px;width:327px;height:420px;background:#f3f2f1;border-radius:8px 8px 0 0;box-shadow:-2px 0 4px rgba(0,0,0,0.08)"></div>
<div class="t" style="left:1805px;top:1095.5px;font-size:23.5px;color:#252423">Type</div>
<div class="a" style="left:1806.5px;top:1129.5px;width:295px;height:47px;background:#fff;border:2px solid #8a8886;border-radius:4px"></div>
<div class="t" style="left:1823.5px;top:1143px;font-size:23.5px;color:#605e5c">Year</div>
<div class="t" style="left:1805px;top:1199.5px;font-size:23.5px;color:#252423;transform-origin:left;transform:scaleX(1.001)">Today Color</div>
<div class="a" style="left:1806.5px;top:1233.5px;width:103px;height:47px;background:#fff;border:2px solid #8a8886;border-radius:4px"></div>
<div class="a" style="left:1816px;top:1241.0px;width:32px;height:32px;background:#000;border:2px solid #8a8886"></div>
<div class="t" style="left:1805px;top:1303.5px;font-size:23.5px;color:#252423;transform-origin:left;transform:scaleX(0.981)">Axis Color</div>
<div class="a" style="left:1806.5px;top:1337.8px;width:103px;height:47px;background:#fff;border:2px solid #8a8886;border-radius:4px"></div>
<div class="a" style="left:1816px;top:1345.3px;width:32px;height:32px;background:#000;border:2px solid #8a8886"></div>
<div class="t" style="left:1805px;top:1407.6px;font-size:23.5px;color:#252423;transform-origin:left;transform:scaleX(0.986)">Axis Text Color</div>
<div class="a" style="left:1806.5px;top:1442px;width:103px;height:47px;background:#fff;border:2px solid #8a8886;border-radius:4px"></div>
<div class="a" style="left:1816px;top:1449.5px;width:32px;height:32px;background:#000;border:2px solid #8a8886"></div>
<svg style="left:0;top:0" width="2495" height="1485" viewBox="0 0 2495 1485"><path d="M2064.5 1147.5 L2075.7 1159.5 L2087 1147.5 M1876.5 1251.0 L1888 1263.0 L1899.5 1251.0 M1876.5 1355.3 L1888 1367.3 L1899.5 1355.3 M1876.5 1459.5 L1888 1471.5 L1899.5 1459.5 " fill="none" stroke="#323130" stroke-width="2"/></svg>
<div class="a" style="left:1778px;top:1046px;width:336px;height:429.5px;border:4px solid #f63f45"></div>
<div class="a" style="left:2122px;top:823px;width:12px;height:680px;background:#8a8886;border-radius:6px"></div>
<!-- /PANES -->
<!-- DATAPANE -->
<div class="t" style="left:2153px;top:282.8px;font-size:31px;color:#252423;-webkit-text-stroke:0.7px #252423">Data</div>
<div class="a" style="left:2145.5px;top:350.5px;width:342px;height:45.5px;background:#fff;border:1px solid #d1d1d1;border-bottom:2px solid #616161;border-radius:6px"></div>
<div class="t" style="left:2212px;top:362.7px;font-size:25px;color:#707070">Search</div>
<div class="t" style="left:2230px;top:429.5px;font-size:23.5px;color:#252423;transform-origin:left;transform:scaleX(0.98)">tenancy-schedule</div>
<div class="a" style="left:2146px;top:1039.5px;width:340px;height:44px;background:#f1f0ef;border-radius:8px"></div>
<div class="a" style="left:2146px;top:1087px;width:340px;height:48px;background:#ededed;border-radius:8px;overflow:hidden"><div class="a" style="left:0;top:0;width:8px;height:48px;background:#c8c6c4"></div></div>
<div class="t" style="left:2300.5px;top:478.3px;font-size:23px;color:#252423;transform-origin:left;transform:scaleX(1.006)">Area (sq ft)</div>
<div class="t" style="left:2300.5px;top:526.3px;font-size:23px;color:#252423;transform-origin:left;transform:scaleX(0.953)">Avg Rent (£ PSF)</div>
<div class="t" style="left:2300.5px;top:574.3px;font-size:23px;color:#252423;transform-origin:left;transform:scaleX(0.941)">Breaks</div>
<div class="t" style="left:2300.5px;top:622.3px;font-size:23px;color:#252423;transform-origin:left;transform:scaleX(1.016)">Comments</div>
<div class="t" style="left:2300.5px;top:670.3px;font-size:23px;color:#252423;transform-origin:left;transform:scaleX(0.825)">EPC</div>
<div class="t" style="left:2300.5px;top:718.3px;font-size:23px;color:#252423;transform-origin:left;transform:scaleX(1.020)">Fit Out</div>
<div class="t" style="left:2300.5px;top:766.3px;font-size:23px;color:#252423;transform-origin:left;transform:scaleX(1.002)">Floor</div>
<div class="t" style="left:2300.5px;top:814.3px;font-size:23px;color:#252423;transform-origin:left;transform:scaleX(0.951)">Lease Expiry</div>
<div class="t" style="left:2300.5px;top:862.3px;font-size:23px;color:#252423;transform-origin:left;transform:scaleX(0.956)">Lease Start</div>
<div class="t" style="left:2300.5px;top:910.3px;font-size:23px;color:#252423;transform-origin:left;transform:scaleX(0.941)">LeaseExpiry_Fill...</div>
<div class="t" style="left:2300.5px;top:958.3px;font-size:23px;color:#252423;transform-origin:left;transform:scaleX(0.957)">LeaseStart_Filled</div>
<div class="t" style="left:2300.5px;top:1006.3px;font-size:23px;color:#252423;transform-origin:left;transform:scaleX(1.030)">Outside 1954 Act</div>
<div class="t" style="left:2300.5px;top:1054.3px;font-size:23px;color:#252423;transform-origin:left;transform:scaleX(0.954)">Rent (£ PA)</div>
<div class="t" style="left:2300.5px;top:1102.3px;font-size:23px;color:#252423;transform-origin:left;transform:scaleX(0.922)">Rent (£ PSF)</div>
<div class="t" style="left:2300.5px;top:1150.3px;font-size:23px;color:#252423;transform-origin:left;transform:scaleX(0.969)">Rent Review</div>
<div class="t" style="left:2300.5px;top:1198.3px;font-size:23px;color:#252423;transform-origin:left;transform:scaleX(0.999)">Tenant</div>
<div class="t" style="left:2300.5px;top:1246.3px;font-size:23px;color:#252423;transform-origin:left;transform:scaleX(0.965)">Vacancy Rate (%)</div>
<svg style="left:0;top:0" width="2495" height="1485" viewBox="0 0 2495 1485"><g fill="none" stroke="#323130" stroke-width="2">
<circle cx="2180.5" cy="371" r="9.5"/><path d="M2187.5 378 L2197.5 387.5"/>
<path d="M2162.5 433.8 L2173.8 444.3 L2185 433.8" stroke-width="1.8"/>
<rect x="2195" y="428" width="22" height="21.5" rx="4.5" stroke-width="2"/>
<path d="M2195 434.3 H2217 M2195 443.6 H2217 M2201.3 428 V449.5 M2210.8 428 V449.5" stroke-width="2"/>
</g>
<circle cx="2218" cy="451" r="12" fill="#117865"/>
<path d="M2213.2 451.6 L2216.5 454.8 L2222.6 448.4" fill="none" stroke="#fff" stroke-width="2.6"/>
<g fill="none" stroke="#252423" stroke-width="1.8">
<path d="M2286.5 475.8 H2265.8 L2276.6 486.2 L2265.8 498 H2286.5" stroke="#000" stroke-width="1.8"/>
<rect x="2225" y="476" width="22.5" height="22.5" rx="3" stroke="#7a7a7a" stroke-width="1.6"/>
<rect x="2264.5" y="522" width="23" height="26.5" rx="4.5" stroke="#000" stroke-width="1.9"/>
<rect x="2269" y="526.2" width="14" height="6.2" rx="2.5" stroke="#000" stroke-width="1.7"/>
<circle cx="2270.2" cy="537.3" r="1.9" fill="#000" stroke="none"/>
<circle cx="2276" cy="537.3" r="1.9" fill="#000" stroke="none"/>
<circle cx="2281.8" cy="537.3" r="1.9" fill="#000" stroke="none"/>
<circle cx="2270.2" cy="543.2" r="1.9" fill="#000" stroke="none"/>
<circle cx="2276" cy="543.2" r="1.9" fill="#000" stroke="none"/>
<circle cx="2281.8" cy="543.2" r="1.9" fill="#000" stroke="none"/>
<rect x="2225" y="524" width="22.5" height="22.5" rx="3" stroke="#7a7a7a" stroke-width="1.6"/>
<path d="M2199 573 L2209.5 583 L2199 593"/>
<rect x="2264.5" y="572" width="22" height="22" rx="4" stroke="#000" stroke-width="2"/>
<path d="M2264.5 577.5 H2286.5" stroke="#000" stroke-width="1.6"/>
<circle cx="2270.5" cy="583.5" r="1.4" fill="#000" stroke="none"/>
<circle cx="2275.5" cy="583.5" r="1.4" fill="#000" stroke="none"/>
<circle cx="2280.5" cy="583.5" r="1.4" fill="#000" stroke="none"/>
<circle cx="2270.5" cy="588.5" r="1.4" fill="#000" stroke="none"/>
<circle cx="2275.5" cy="588.5" r="1.4" fill="#000" stroke="none"/>
<rect x="2225" y="572" width="22.5" height="22.5" rx="3" stroke="#7a7a7a" stroke-width="1.6"/>
<rect x="2225" y="620" width="22.5" height="22.5" rx="3" stroke="#7a7a7a" stroke-width="1.6"/>
<rect x="2225" y="668" width="22.5" height="22.5" rx="3" stroke="#7a7a7a" stroke-width="1.6"/>
<rect x="2225" y="716" width="22.5" height="22.5" rx="3" stroke="#7a7a7a" stroke-width="1.6"/>
<rect x="2225" y="764" width="22.5" height="22.5" rx="3" stroke="#7a7a7a" stroke-width="1.6"/>
<path d="M2199 813 L2209.5 823 L2199 833"/>
<rect x="2264.5" y="812" width="22" height="22" rx="4" stroke="#000" stroke-width="2"/>
<path d="M2264.5 817.5 H2286.5" stroke="#000" stroke-width="1.6"/>
<circle cx="2270.5" cy="823.5" r="1.4" fill="#000" stroke="none"/>
<circle cx="2275.5" cy="823.5" r="1.4" fill="#000" stroke="none"/>
<circle cx="2280.5" cy="823.5" r="1.4" fill="#000" stroke="none"/>
<circle cx="2270.5" cy="828.5" r="1.4" fill="#000" stroke="none"/>
<circle cx="2275.5" cy="828.5" r="1.4" fill="#000" stroke="none"/>
<rect x="2225" y="812" width="22.5" height="22.5" rx="3" fill="#117865" stroke="#7a7a7a" stroke-width="1.6"/>
<path d="M2229.5 823.3 L2234.5 828.3 L2243 818.5" stroke="#fff" stroke-width="1.8"/>
<path d="M2199 861 L2209.5 871 L2199 881"/>
<rect x="2264.5" y="860" width="22" height="22" rx="4" stroke="#000" stroke-width="2"/>
<path d="M2264.5 865.5 H2286.5" stroke="#000" stroke-width="1.6"/>
<circle cx="2270.5" cy="871.5" r="1.4" fill="#000" stroke="none"/>
<circle cx="2275.5" cy="871.5" r="1.4" fill="#000" stroke="none"/>
<circle cx="2280.5" cy="871.5" r="1.4" fill="#000" stroke="none"/>
<circle cx="2270.5" cy="876.5" r="1.4" fill="#000" stroke="none"/>
<circle cx="2275.5" cy="876.5" r="1.4" fill="#000" stroke="none"/>
<rect x="2225" y="860" width="22.5" height="22.5" rx="3" fill="#117865" stroke="#7a7a7a" stroke-width="1.6"/>
<path d="M2229.5 871.3 L2234.5 876.3 L2243 866.5" stroke="#fff" stroke-width="1.8"/>
<path d="M2199 909 L2209.5 919 L2199 929"/>
<path d="M2274.2 929.8 H2270 Q2266 929.8 2266 925.3 V913 Q2266 908.5 2270.5 908.5 H2282.3 Q2286.8 908.5 2286.8 913 V922.3" stroke="#000" stroke-width="1.9"/>
<path d="M2270.8 908.5 V929.3 M2271 913.5 H2283.5 M2281.1 908.5 V912" stroke="#000" stroke-width="1.6"/>
<path d="M2272.3 933.5 Q2276.3 935.3 2277.1 928 L2278.6 918.5 Q2279.6 915.2 2282.8 916.6 M2274.6 921.8 H2281.8 M2282.6 925.2 Q2284.3 924.2 2285.6 927.2 L2288.4 932.3 Q2289.8 934.8 2291.6 933.4 M2291.6 925.3 L2282.6 934.2" stroke="#f3f2f1" stroke-width="4.2"/>
<path d="M2272.3 933.5 Q2276.3 935.3 2277.1 928 L2278.6 918.5 Q2279.6 915.2 2282.8 916.6 M2274.6 921.8 H2281.8 M2282.6 925.2 Q2284.3 924.2 2285.6 927.2 L2288.4 932.3 Q2289.8 934.8 2291.6 933.4 M2291.6 925.3 L2282.6 934.2" stroke="#000" stroke-width="2"/>
<rect x="2225" y="908" width="22.5" height="22.5" rx="3" stroke="#7a7a7a" stroke-width="1.6"/>
<path d="M2199 957 L2209.5 967 L2199 977"/>
<path d="M2274.2 977.8 H2270 Q2266 977.8 2266 973.3 V961 Q2266 956.5 2270.5 956.5 H2282.3 Q2286.8 956.5 2286.8 961 V970.3" stroke="#000" stroke-width="1.9"/>
<path d="M2270.8 956.5 V977.3 M2271 961.5 H2283.5 M2281.1 956.5 V960" stroke="#000" stroke-width="1.6"/>
<path d="M2272.3 981.5 Q2276.3 983.3 2277.1 976 L2278.6 966.5 Q2279.6 963.2 2282.8 964.6 M2274.6 969.8 H2281.8 M2282.6 973.2 Q2284.3 972.2 2285.6 975.2 L2288.4 980.3 Q2289.8 982.8 2291.6 981.4 M2291.6 973.3 L2282.6 982.2" stroke="#f3f2f1" stroke-width="4.2"/>
<path d="M2272.3 981.5 Q2276.3 983.3 2277.1 976 L2278.6 966.5 Q2279.6 963.2 2282.8 964.6 M2274.6 969.8 H2281.8 M2282.6 973.2 Q2284.3 972.2 2285.6 975.2 L2288.4 980.3 Q2289.8 982.8 2291.6 981.4 M2291.6 973.3 L2282.6 982.2" stroke="#000" stroke-width="2"/>
<rect x="2225" y="956" width="22.5" height="22.5" rx="3" stroke="#7a7a7a" stroke-width="1.6"/>
<rect x="2225" y="1004" width="22.5" height="22.5" rx="3" stroke="#7a7a7a" stroke-width="1.6"/>
<path d="M2286.5 1051.8 H2265.8 L2276.6 1062.2 L2265.8 1074 H2286.5" stroke="#000" stroke-width="1.8"/>
<rect x="2225" y="1052" width="22.5" height="22.5" rx="3" stroke="#7a7a7a" stroke-width="1.6"/>
<path d="M2286.5 1099.8 H2265.8 L2276.6 1110.2 L2265.8 1122 H2286.5" stroke="#000" stroke-width="1.8"/>
<rect x="2225" y="1100" width="22.5" height="22.5" rx="3" stroke="#7a7a7a" stroke-width="1.6"/>
<path d="M2199 1149 L2209.5 1159 L2199 1169"/>
<rect x="2264.5" y="1148" width="22" height="22" rx="4" stroke="#000" stroke-width="2"/>
<path d="M2264.5 1153.5 H2286.5" stroke="#000" stroke-width="1.6"/>
<circle cx="2270.5" cy="1159.5" r="1.4" fill="#000" stroke="none"/>
<circle cx="2275.5" cy="1159.5" r="1.4" fill="#000" stroke="none"/>
<circle cx="2280.5" cy="1159.5" r="1.4" fill="#000" stroke="none"/>
<circle cx="2270.5" cy="1164.5" r="1.4" fill="#000" stroke="none"/>
<circle cx="2275.5" cy="1164.5" r="1.4" fill="#000" stroke="none"/>
<rect x="2225" y="1148" width="22.5" height="22.5" rx="3" stroke="#7a7a7a" stroke-width="1.6"/>
<rect x="2225" y="1196" width="22.5" height="22.5" rx="3" fill="#117865" stroke="#7a7a7a" stroke-width="1.6"/>
<path d="M2229.5 1207.3 L2234.5 1212.3 L2243 1202.5" stroke="#fff" stroke-width="1.8"/>
<rect x="2264.5" y="1242" width="23" height="26.5" rx="4.5" stroke="#000" stroke-width="1.9"/>
<rect x="2269" y="1246.2" width="14" height="6.2" rx="2.5" stroke="#000" stroke-width="1.7"/>
<circle cx="2270.2" cy="1257.3" r="1.9" fill="#000" stroke="none"/>
<circle cx="2276" cy="1257.3" r="1.9" fill="#000" stroke="none"/>
<circle cx="2281.8" cy="1257.3" r="1.9" fill="#000" stroke="none"/>
<circle cx="2270.2" cy="1263.2" r="1.9" fill="#000" stroke="none"/>
<circle cx="2276" cy="1263.2" r="1.9" fill="#000" stroke="none"/>
<circle cx="2281.8" cy="1263.2" r="1.9" fill="#000" stroke="none"/>
<rect x="2225" y="1244" width="22.5" height="22.5" rx="3" stroke="#7a7a7a" stroke-width="1.6"/>
</g>
<g fill="#252423"><circle cx="2460" cy="1111" r="1.7"/><circle cx="2470" cy="1111" r="1.7"/><circle cx="2479.5" cy="1111" r="1.7"/></g>
</svg>
<!-- /DATAPANE -->
<!-- shadow over panes -->
<div class="a" style="left:0;top:258px;width:2495px;height:10px;background:linear-gradient(rgba(0,0,0,0.12),rgba(0,0,0,0))"></div>

</body></html>
